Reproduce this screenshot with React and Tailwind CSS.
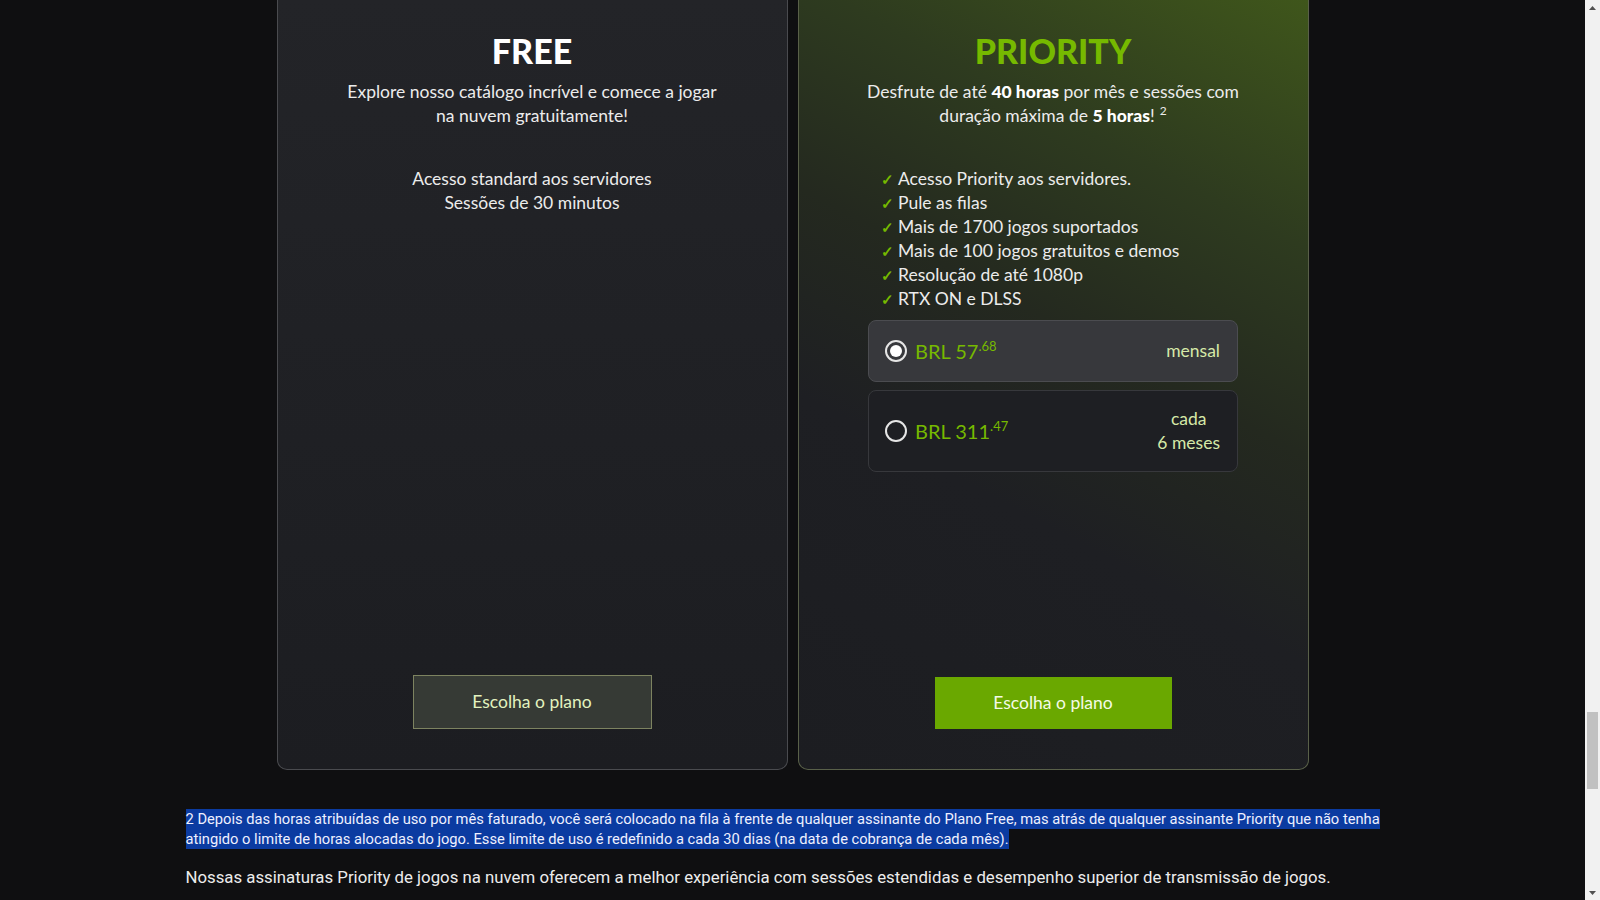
import React, { useState } from 'react';

const features = [
  'Acesso Priority aos servidores.',
  'Pule as filas',
  'Mais de 1700 jogos suportados',
  'Mais de 100 jogos gratuitos e demos',
  'Resolução de até 1080p',
  'RTX ON e DLSS',
];

const Radio = ({ checked }) => (
  <span className="flex items-center justify-center w-[22px] h-[22px] rounded-full border-2 border-[#e6e6e6] shrink-0">
    {checked && <span className="w-[12px] h-[12px] rounded-full bg-white" />}
  </span>
);

const PriceOption = ({ checked, whole, cents, children, onClick }) => (
  <button
    type="button"
    onClick={onClick}
    className={
      checked
        ? 'flex items-center w-full h-[62px] pl-[16px] pr-[17px] rounded-[8px] border border-[#4b4c50] bg-[#37383c] text-left'
        : 'flex items-center w-full h-[82px] pl-[16px] pr-[17px] rounded-[8px] border border-[#37383c] bg-[#1e1f23] text-left'
    }
  >
    <Radio checked={checked} />
    <span className="ml-[8px] text-[20px] leading-none text-[#76b900]">
      BRL {whole}
      <span className="inline-block -translate-y-[8px] text-[13px]">.{cents}</span>
    </span>
    <span className="ml-auto text-center text-[17.5px] leading-[24px] text-[#d6e9a8]">{children}</span>
  </button>
);

const FreeCard = () => (
  <div className="flex flex-col items-center w-[511px] h-[770px] rounded-b-[10px] border-x border-b border-[#4a4b4f] bg-[linear-gradient(180deg,#232428_0%,#1c1d21_100%)] pt-[31px] pb-[40px]">
    <h2 className="text-[34px] leading-[40px] font-black text-white">FREE</h2>
    <p className="mt-[9px] text-center text-[17.5px] leading-[24px] text-[#ececec]">
      Explore nosso catálogo incrível e comece a jogar
      <br />
      na nuvem gratuitamente!
    </p>
    <div className="mt-[39px] text-center text-[17.5px] leading-[24px] text-[#ececec]">
      <p>Acesso standard aos servidores</p>
      <p>Sessões de 30 minutos</p>
    </div>
    <button
      type="button"
      className="mt-auto w-[239px] h-[54px] border border-[#7d8360] bg-[#363a35] text-[17.5px] text-[#e2f2bf]"
    >
      Escolha o plano
    </button>
  </div>
);

const PriorityCard = () => {
  const [plan, setPlan] = useState('monthly');

  return (
    <div className="flex flex-col items-center w-[511px] h-[770px] rounded-b-[10px] border-x border-b border-[#596049] bg-[linear-gradient(208deg,#3f561b_0%,#2e3b1f_24%,#24291f_44%,#1e1f23_64%,#1c1d21_100%)] pt-[31px] pb-[40px]">
      <h2 className="text-[34px] leading-[40px] font-black text-[#76b900]">PRIORITY</h2>
      <p className="mt-[9px] text-center text-[17.5px] leading-[24px] text-[#ececec]">
        Desfrute de até <b className="font-black text-white">40 horas</b> por mês e sessões com
        <br />
        duração máxima de <b className="font-black text-white">5 horas</b>!
        <span className="inline-block ml-[5px] -translate-y-[7px] text-[12px]">2</span>
      </p>
      <ul className="mt-[37px] w-[370px] pl-[13px] text-[17.5px] leading-[24px] text-[#ececec]">
        {features.map((f) => (
          <li key={f} className="flex items-center">
            <span className="w-[17px] text-[15px] font-bold text-[#76b900]">✓</span>
            {f}
          </li>
        ))}
      </ul>
      <div className="mt-[9px] flex flex-col gap-[8px] w-[370px]">
        <PriceOption checked={plan === 'monthly'} whole="57" cents="68" onClick={() => setPlan('monthly')}>
          mensal
        </PriceOption>
        <PriceOption checked={plan === 'half'} whole="311" cents="47" onClick={() => setPlan('half')}>
          cada
          <br />
          6 meses
        </PriceOption>
      </div>
      <button
        type="button"
        className="mt-auto w-[237px] h-[52px] bg-[#6aa800] text-[17.5px] text-[#f4fbe6]"
      >
        Escolha o plano
      </button>
    </div>
  );
};

const Scrollbar = () => (
  <div className="flex flex-col items-center w-[15px] h-full bg-[#f1f1f1] shrink-0">
    <div className="h-[15px] flex items-center justify-center">
      <svg width="7" height="4" viewBox="0 0 7 4"><path d="M3.5 0L7 4H0z" fill="#505050" /></svg>
    </div>
    <div className="mt-[697px] w-[11px] h-[77px] bg-[#c1c1c1]" />
    <div className="mt-auto h-[15px] flex items-center justify-center">
      <svg width="7" height="4" viewBox="0 0 7 4"><path d="M0 0h7L3.5 4z" fill="#505050" /></svg>
    </div>
  </div>
);

export default function App() {
  return (
    <div className="flex w-full h-[900px] overflow-hidden bg-[#0f0f11]" style={{ fontFamily: 'Lato, "Noto Sans", sans-serif' }}>
      <main className="flex-1 flex flex-col items-center">
        <div className="flex gap-[10px]">
          <FreeCard />
          <PriorityCard />
        </div>
        <div className="w-[1214px] mt-[39px]" style={{ fontFamily: 'Roboto, sans-serif' }}>
          <div className="text-[14.7px] leading-[20px] text-[#eef0ff]">
            <span className="block w-fit bg-[#0b3ba1]">
              2 Depois das horas atribuídas de uso por mês faturado, você será colocado na fila à frente de qualquer assinante do Plano Free, mas atrás de qualquer assinante Priority que não tenha
            </span>
            <span className="block w-fit bg-[#0b3ba1]">
              atingido o limite de horas alocadas do jogo. Esse limite de uso é redefinido a cada 30 dias (na data de cobrança de cada mês).
            </span>
          </div>
          <p className="mt-[16px] text-[16.8px] leading-[24px] text-[#ececec]">
            Nossas assinaturas Priority de jogos na nuvem oferecem a melhor experiência com sessões estendidas e desempenho superior de transmissão de jogos.
          </p>
        </div>
      </main>
      <Scrollbar />
    </div>
  );
}
